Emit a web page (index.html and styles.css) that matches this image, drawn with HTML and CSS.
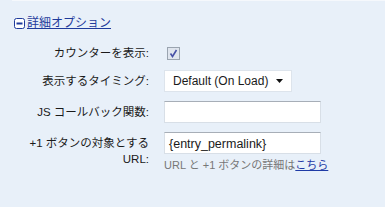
FILE: index.html
```html
<!DOCTYPE html>
<html lang="ja">
<head>
    <meta charset="UTF-8">
    <title>詳細オプション</title>
    <link rel="stylesheet" href="styles.css">
</head>
<body>
    <div class="top-edge"></div>
    <div class="options">
        <a href="#" class="toggle-link">
            <svg class="minus-box" width="11" height="11" viewBox="0 0 11 11">
                <rect x="0.5" y="0.5" width="10" height="10" rx="2" fill="#fff" stroke="#1f3b9c"/>
                <rect x="2.5" y="4.5" width="6" height="2" fill="#1f3b9c"/>
            </svg>詳細オプション</a>

        <div class="form-grid">
            <label class="label">カウンターを表示:</label>
            <div class="field">
                <span class="checkbox">
                    <svg width="13" height="13" viewBox="0 0 13 13">
                        <rect x="0.5" y="0.5" width="12" height="12" fill="#dfe5ee" stroke="#9aa4b0"/>
                        <path d="M3.5 6.5 L5.5 9.5 L9.5 3" fill="none" stroke="#4650a6" stroke-width="1.6"/>
                    </svg>
                </span>
            </div>

            <label class="label">表示するタイミング:</label>
            <div class="field">
                <div class="select">
                    <span>Default (On Load)</span>
                    <svg width="7" height="4" viewBox="0 0 7 4"><path d="M0 0 H7 L3.5 4 Z" fill="#111"/></svg>
                </div>
            </div>

            <label class="label">JS コールバック関数:</label>
            <div class="field">
                <div class="text-input"></div>
            </div>

            <label class="label label-top">+1 ボタンの対象とする<br>URL:</label>
            <div class="field field-top">
                <div class="text-input">{entry_permalink}</div>
                <p class="hint">URL と +1 ボタンの詳細は<a href="#">こちら</a></p>
            </div>
        </div>
    </div>
</body>
</html>
```

FILE: styles.css
```css
body {
    margin: 0;
    background: #e8f0f9;
    font-family: "Liberation Sans", "Noto Sans CJK JP", sans-serif;
    font-size: 12px;
    color: #1a1a1a;
}
.top-edge {
    height: 1px;
    margin-left: 12px;
    background: #f5f8fc;
}
.options {
    padding: 15px 0 0 14px;
}
.toggle-link {
    display: inline-flex;
    align-items: center;
    gap: 2px;
    color: #1f3b9c;
    font-size: 12px;
    line-height: 14px;
    text-decoration: underline;
}
.minus-box {
    margin-top: 1px;
}
.form-grid {
    display: grid;
    grid-template-columns: 135px 210px;
    column-gap: 15px;
    row-gap: 9px;
    margin-top: 13px;
    align-items: center;
}
.label {
    text-align: right;
    font-size: 11.5px;
    line-height: 16px;
}
.label-top {
    align-self: start;
    margin-top: 3px;
}
.field-top {
    align-self: start;
}
.checkbox {
    display: block;
    margin-left: 3px;
    height: 13px;
}
.select {
    display: flex;
    align-items: center;
    justify-content: space-between;
    width: 110px;
    height: 20px;
    padding: 0 8px 0 8px;
    background: #fff;
    border: 1px solid #dde4ec;
    font-size: 12px;
}
.text-input {
    box-sizing: border-box;
    width: 157px;
    height: 22px;
    padding: 3px 4px 0;
    background: #fff;
    border: 1px solid #d8dfe7;
    border-top-color: #a7aeb7;
    font-size: 12.5px;
    line-height: 16px;
}
.hint {
    margin: 3px 0 0 0;
    color: #777;
    font-size: 11px;
    line-height: 16px;
    white-space: nowrap;
}
.hint a {
    color: #1f3ba6;
    text-decoration: underline;
}
```
